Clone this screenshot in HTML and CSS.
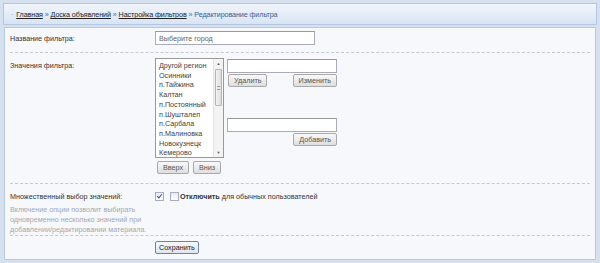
FILE: index.html
```html
<!DOCTYPE html>
<html lang="ru">
<head>
<meta charset="UTF-8">
<title>Редактирование фильтра</title>
<link rel="stylesheet" href="styles.css">
</head>
<body>
<div class="crumbs">
  <span class="dot">·</span>
  <a href="#">Главная</a> » <a href="#">Доска объявлений</a> » <a href="#">Настройка фильтров</a> » <span class="current">Редактирование фильтра</span>
</div>
<form class="panel">
  <div class="row">
    <label class="name">Название фильтра:</label>
    <div><input class="field wide" type="text" value="Выберите город"></div>
  </div>
  <div class="row values">
    <label class="name">Значения фильтра:</label>
    <div class="values-box">
      <div class="list-col">
        <div class="listbox">
          <ul>
            <li>Другой регион</li>
            <li>Осинники</li>
            <li>п.Тайжина</li>
            <li>Калтан</li>
            <li>п.Постоянный</li>
            <li>п.Шушталеп</li>
            <li>п.Сарбала</li>
            <li>п.Малиновка</li>
            <li>Новокузнецк</li>
            <li>Кемерово</li>
          </ul>
          <div class="scroll">
            <span class="arr">▲</span>
            <span class="thumb"><i></i></span>
            <span class="arr down">▼</span>
          </div>
        </div>
        <div class="move">
          <button type="button" class="btn">Вверх</button>
          <button type="button" class="btn">Вниз</button>
        </div>
      </div>
      <div class="edit-col">
        <input class="field short" type="text">
        <div class="pair">
          <button type="button" class="btn">Удалить</button>
          <button type="button" class="btn">Изменить</button>
        </div>
        <input class="field short add" type="text">
        <div class="pair end">
          <button type="button" class="btn">Добавить</button>
        </div>
      </div>
    </div>
  </div>
  <div class="row multi">
    <div>
      <label class="name">Множественный выбор значений:</label>
      <p class="hint">Включение опции позволит выбирать одновременно несколько значений при добавлении/редактировании материала.</p>
    </div>
    <div class="checks">
      <span class="cb on"></span>
      <span class="cb"></span>
      <span><b>Отключить</b> для обычных пользователей</span>
    </div>
  </div>
  <div class="row last">
    <div></div>
    <div><button type="submit" class="btn save">Сохранить</button></div>
  </div>
</form>
</body>
</html>
```
FILE: styles.css
```css
body{
	margin: 0;
	padding: 3px 3px 4px;
	background: #d6e1f0;
	font-family: "Liberation Sans", Tahoma, sans-serif;
	font-size: 7.2px;
	color: #333;
}
.crumbs{
	height: 20px;
	line-height: 21px;
	padding-left: 7px;
	border: 1px solid #b4c6e2;
	background: linear-gradient(#f1f5fb, #d9e4f4);
	color: #4a6a99;
	letter-spacing: -0.1px;
}
.crumbs a{
	color: #222;
}
.crumbs .dot{
	color: #777;
	margin-right: 1px;
}
.crumbs .current{
	color: #3d5e8e;
}
.panel{
	margin: 2px 1px 0;
	padding: 0 5px;
	height: 231px;
	border: 1px solid #b8c9e2;
	background: #f7f8fc;
}
.row{
	display: grid;
	grid-template-columns: 145px 1fr;
	border-bottom: 1px dashed #c2cad6;
	padding: 3px 0 7px;
}
.row.last{
	border-bottom: none;
	padding-top: 5px;
}
.name{
	display: block;
	padding-top: 3px;
	color: #333;
}
.field{
	box-sizing: border-box;
	height: 14px;
	border: 1px solid #aab;
	border-top-color: #999;
	background: #fff;
	font: 7.2px "Liberation Sans", Tahoma, sans-serif;
	color: #666;
	padding: 0 3px;
}
.wide{
	width: 160px;
}
.short{
	width: 110px;
}
.values{
	padding: 5px 0 9px;
}
.values-box{
	display: flex;
	gap: 3px;
}
.listbox{
	box-sizing: border-box;
	width: 69px;
	height: 100px;
	border: 1px solid #999;
	background: #fff;
	display: flex;
}
.listbox ul{
	flex: 1;
	margin: 0;
	padding: 2px 0 0 3px;
	list-style: none;
	line-height: 9.7px;
	color: #444;
}
.scroll{
	width: 9px;
	display: flex;
	flex-direction: column;
	background: #f3f3f3;
	border-left: 1px solid #e2e2e2;
}
.arr{
	height: 9px;
	font-size: 4px;
	line-height: 9px;
	text-align: center;
	color: #555;
}
.down{
	margin-top: auto;
}
.thumb{
	margin: 1px 1px 0;
	height: 35px;
	border: 1px solid #b6b6b6;
	border-radius: 1px;
	background: linear-gradient(90deg, #f4f4f4, #dcdcdc);
	display: flex;
	align-items: center;
	justify-content: center;
}
.thumb i{
	width: 3px;
	height: 4px;
	border-top: 1px solid #999;
	border-bottom: 1px solid #999;
	box-sizing: border-box;
}
.move{
	display: flex;
	gap: 4px;
	padding: 3px 0 0 2px;
}
.edit-col{
	display: flex;
	flex-direction: column;
	padding-top: 1px;
}
.pair{
	display: flex;
	justify-content: space-between;
	width: 109px;
	padding: 1px 0 0 1px;
}
.pair.end{
	justify-content: flex-end;
}
.add{
	margin-top: 31px;
}
.btn{
	height: 13px;
	padding: 0 5px;
	border: 1px solid #a9a9a9;
	border-radius: 2px;
	background: linear-gradient(#f9f9f9, #dedede);
	font: 7.2px "Liberation Sans", Tahoma, sans-serif;
	color: #555;
	line-height: 11px;
}
.save{
	border-color: #7283a0;
	background: linear-gradient(#f6f8fc, #dfe5ef);
	color: #222;
	padding: 0 3px;
}
.multi{
	padding: 5px 0 0;
}
.hint{
	margin: 4px 0 0;
	width: 140px;
	line-height: 10px;
	color: #a4a8b0;
}
.checks{
	display: flex;
	align-items: flex-start;
	gap: 6px;
	padding-top: 3px;
	color: #333;
}
.cb{
	width: 7px;
	height: 7px;
	border: 1px solid #a8aec0;
	background: linear-gradient(#e8ebf2, #fff);
	position: relative;
	flex: none;
}
.cb + .cb{
	margin-right: -5px;
}
.cb.on::after{
	content: "";
	position: absolute;
	left: 2px;
	top: 0;
	width: 2px;
	height: 4px;
	border: solid #3f5890;
	border-width: 0 1px 1px 0;
	transform: rotate(40deg);
}
```
